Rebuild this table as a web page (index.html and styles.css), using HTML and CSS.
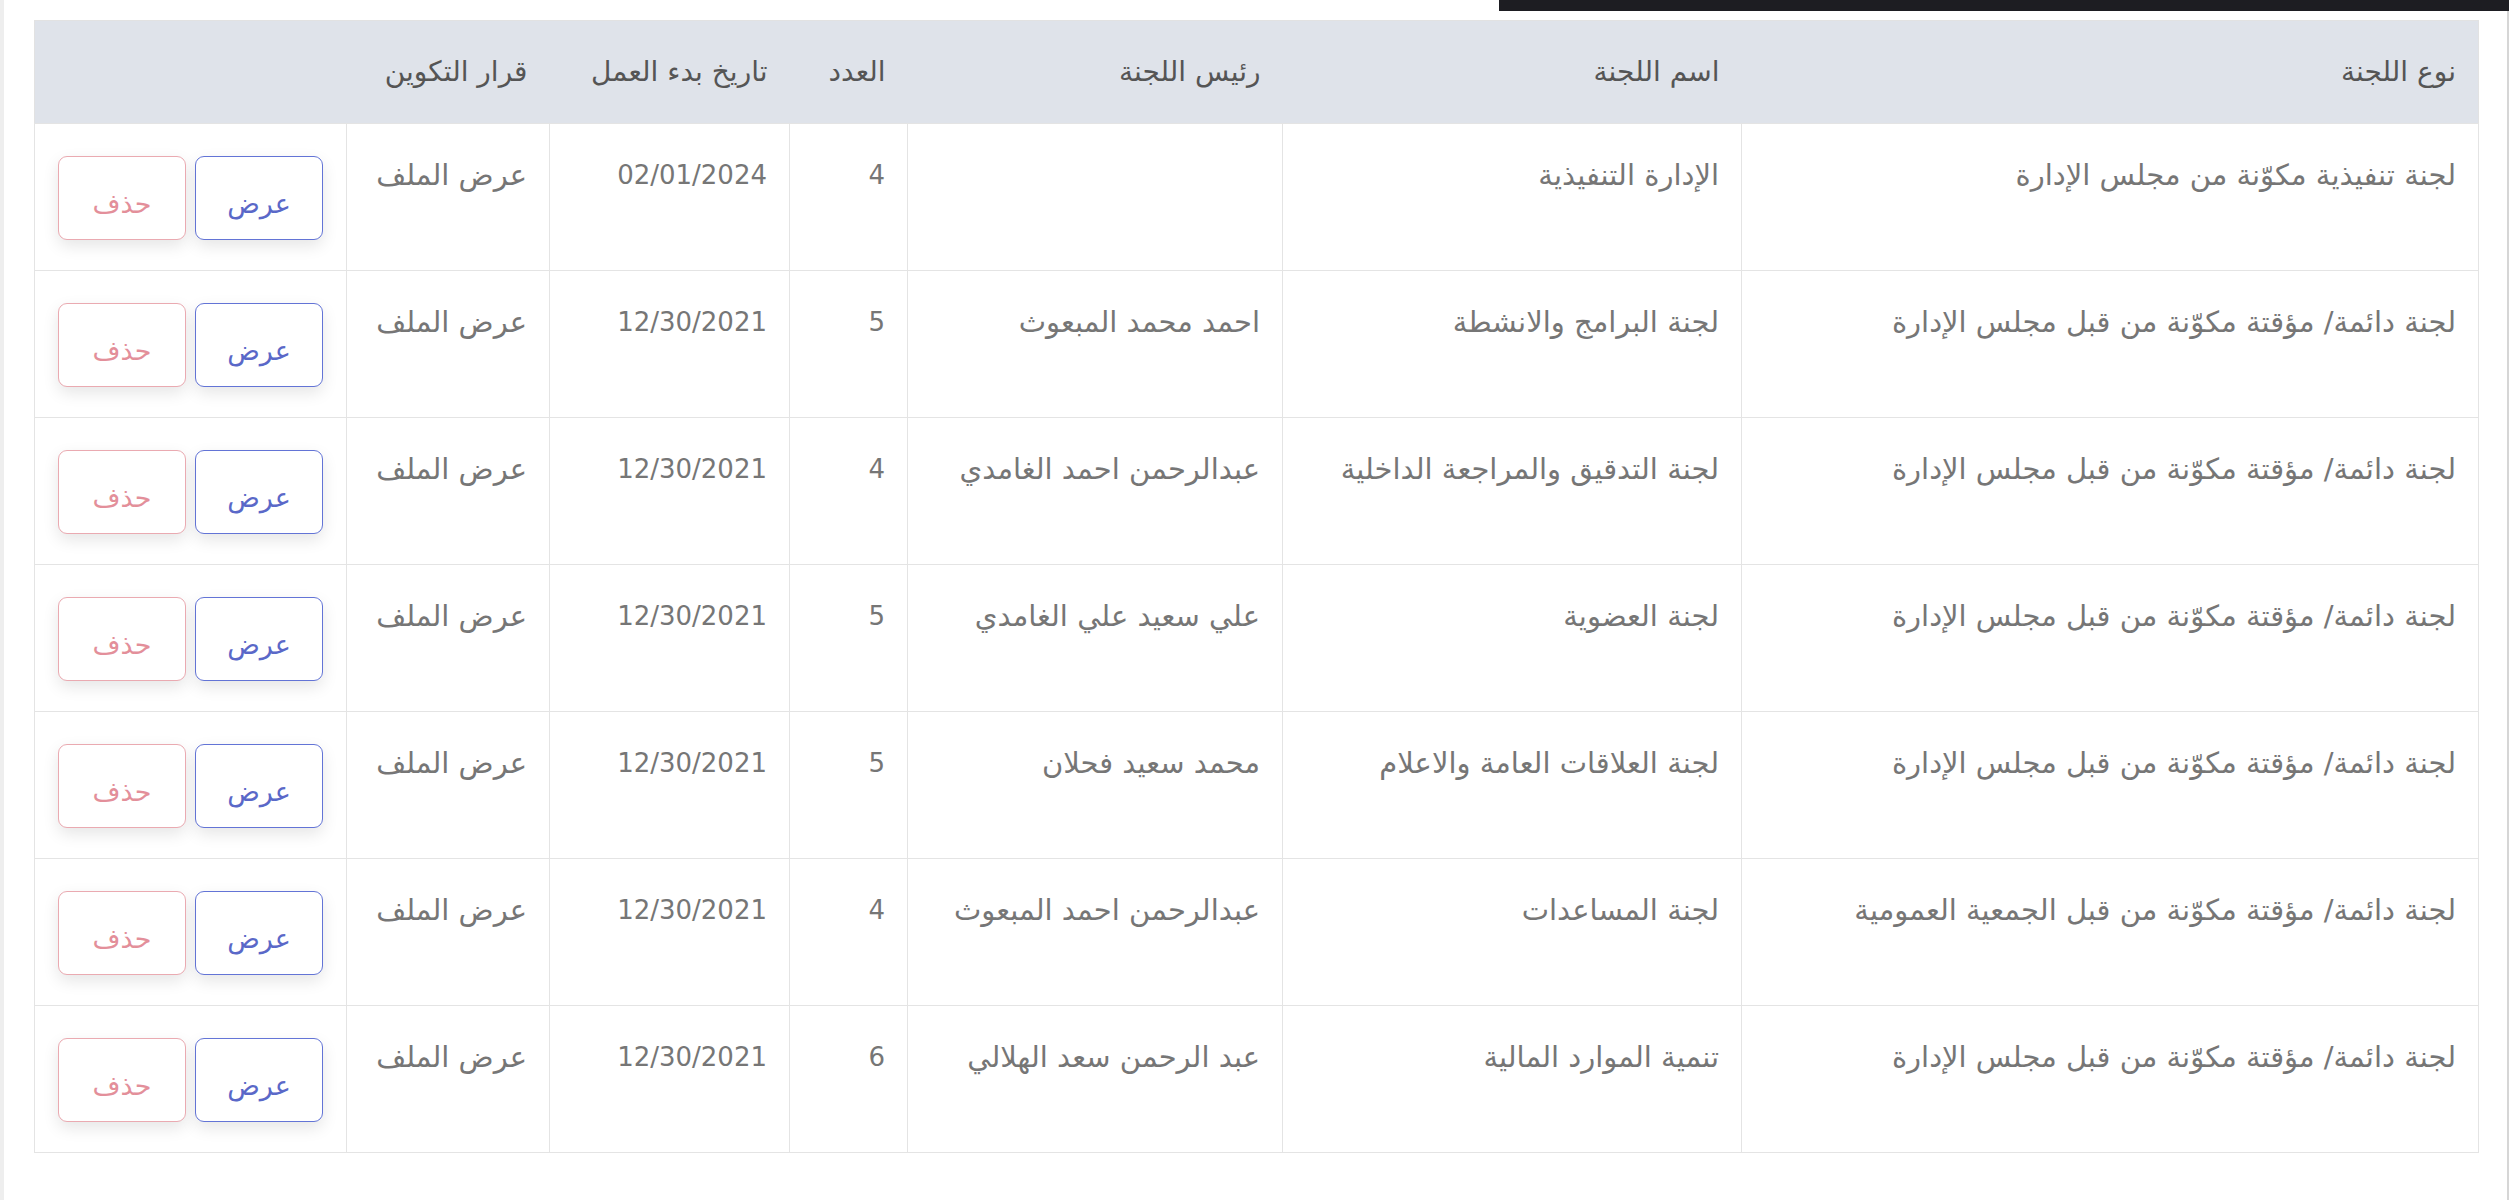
FILE: index.html
```html
<!DOCTYPE html>
<html lang="ar" dir="rtl">
<head>
    <meta charset="UTF-8">
    <title>اللجان</title>
    <link rel="stylesheet" href="styles.css">
</head>
<body>
<div class="page">
    <div class="page__bar"></div>
    <table class="committees">
        <colgroup>
            <col class="committees__col-type">
            <col class="committees__col-name">
            <col class="committees__col-head">
            <col class="committees__col-count">
            <col class="committees__col-date">
            <col class="committees__col-file">
            <col class="committees__col-actions">
        </colgroup>
        <thead>
        <tr>
            <th>نوع اللجنة</th>
            <th>اسم اللجنة</th>
            <th>رئيس اللجنة</th>
            <th>العدد</th>
            <th>تاريخ بدء العمل</th>
            <th>قرار التكوين</th>
            <th></th>
        </tr>
        </thead>
        <tbody>
        <tr>
            <td>لجنة تنفيذية مكوّنة من مجلس الإدارة</td>
            <td>الإدارة التنفيذية</td>
            <td></td>
            <td class="committees__num">4</td>
            <td class="committees__num">02/01/2024</td>
            <td>عرض الملف</td>
            <td class="committees__actions"><div class="actions"><button class="btn btn--view">عرض</button><button class="btn btn--delete">حذف</button></div></td>
        </tr>
        <tr>
            <td>لجنة دائمة/ مؤقتة مكوّنة من قبل مجلس الإدارة</td>
            <td>لجنة البرامج والانشطة</td>
            <td>احمد محمد المبعوث</td>
            <td class="committees__num">5</td>
            <td class="committees__num">12/30/2021</td>
            <td>عرض الملف</td>
            <td class="committees__actions"><div class="actions"><button class="btn btn--view">عرض</button><button class="btn btn--delete">حذف</button></div></td>
        </tr>
        <tr>
            <td>لجنة دائمة/ مؤقتة مكوّنة من قبل مجلس الإدارة</td>
            <td>لجنة التدقيق والمراجعة الداخلية</td>
            <td>عبدالرحمن احمد الغامدي</td>
            <td class="committees__num">4</td>
            <td class="committees__num">12/30/2021</td>
            <td>عرض الملف</td>
            <td class="committees__actions"><div class="actions"><button class="btn btn--view">عرض</button><button class="btn btn--delete">حذف</button></div></td>
        </tr>
        <tr>
            <td>لجنة دائمة/ مؤقتة مكوّنة من قبل مجلس الإدارة</td>
            <td>لجنة العضوية</td>
            <td>علي سعيد علي الغامدي</td>
            <td class="committees__num">5</td>
            <td class="committees__num">12/30/2021</td>
            <td>عرض الملف</td>
            <td class="committees__actions"><div class="actions"><button class="btn btn--view">عرض</button><button class="btn btn--delete">حذف</button></div></td>
        </tr>
        <tr>
            <td>لجنة دائمة/ مؤقتة مكوّنة من قبل مجلس الإدارة</td>
            <td>لجنة العلاقات العامة والاعلام</td>
            <td>محمد سعيد فحلان</td>
            <td class="committees__num">5</td>
            <td class="committees__num">12/30/2021</td>
            <td>عرض الملف</td>
            <td class="committees__actions"><div class="actions"><button class="btn btn--view">عرض</button><button class="btn btn--delete">حذف</button></div></td>
        </tr>
        <tr>
            <td>لجنة دائمة/ مؤقتة مكوّنة من قبل الجمعية العمومية</td>
            <td>لجنة المساعدات</td>
            <td>عبدالرحمن احمد المبعوث</td>
            <td class="committees__num">4</td>
            <td class="committees__num">12/30/2021</td>
            <td>عرض الملف</td>
            <td class="committees__actions"><div class="actions"><button class="btn btn--view">عرض</button><button class="btn btn--delete">حذف</button></div></td>
        </tr>
        <tr>
            <td>لجنة دائمة/ مؤقتة مكوّنة من قبل مجلس الإدارة</td>
            <td>تنمية الموارد المالية</td>
            <td>عبد الرحمن سعد الهلالي</td>
            <td class="committees__num">6</td>
            <td class="committees__num">12/30/2021</td>
            <td>عرض الملف</td>
            <td class="committees__actions"><div class="actions"><button class="btn btn--view">عرض</button><button class="btn btn--delete">حذف</button></div></td>
        </tr>
        </tbody>
    </table>
</div>
</body>
</html>
```

FILE: styles.css
```css
html,
body {
    margin: 0;
    padding: 0;
    background: #fff;
}

.page {
    position: relative;
    box-sizing: border-box;
    width: 2509px;
    min-height: 1200px;
    padding: 20px 28px 0 29px;
    border-left: 4px solid #eeeeee;
    border-right: 2px solid #d6d6d6;
    font-family: "DejaVu Sans", "Noto Sans", sans-serif;
}

.page__bar {
    position: absolute;
    top: 0;
    left: 1495px;
    right: -2px;
    height: 11px;
    background: #1d1d22;
}

.committees {
    width: 2444px;
    table-layout: fixed;
    border-collapse: collapse;
    border: 1px solid #e2e2e2;
    font-size: 29px;
    color: #767676;
}

.committees__col-type { width: 737px; }
.committees__col-name { width: 459px; }
.committees__col-head { width: 375px; }
.committees__col-count { width: 118px; }
.committees__col-date { width: 240px; }
.committees__col-file { width: 203px; }
.committees__col-actions { width: 312px; }

.committees th {
    height: 103px;
    box-sizing: border-box;
    padding: 0 22px;
    background: #dfe3ea;
    color: #555;
    font-size: 28px;
    font-weight: 400;
    text-align: right;
    vertical-align: middle;
    line-height: 40px;
}

.committees td {
    box-sizing: border-box;
    height: 147px;
    padding: 30px 22px 30px;
    border: 1px solid #e4e4e4;
    vertical-align: top;
    text-align: right;
    line-height: 42px;
    white-space: nowrap;
}

.committees td.committees__num {
    font-size: 26px;
}

.committees td.committees__actions {
    padding: 32px 23px 30px;
}

.actions {
    display: flex;
    gap: 9px;
}

.btn {
    flex: 1;
    height: 84px;
    padding: 10px 0 0;
    border-radius: 9px;
    background: #fff;
    font-family: "DejaVu Sans", "Noto Sans", sans-serif;
    font-size: 27px;
    box-shadow: 0 6px 16px rgba(0, 0, 0, .1);
}

.btn--view {
    border: 1.5px solid #6374d6;
    color: #5a68c8;
}

.btn--delete {
    border: 1.5px solid #eaaab1;
    color: #e38f9a;
}
```
